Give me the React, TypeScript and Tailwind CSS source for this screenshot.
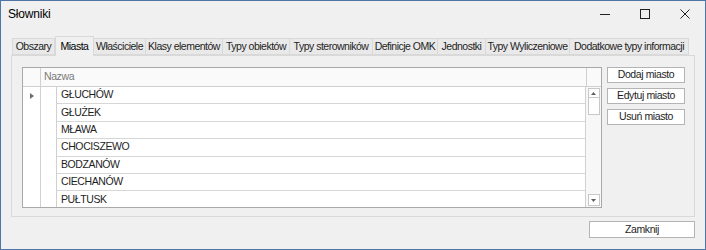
import React from "react";

const tabs = [
  { label: "Obszary", w: 42 },
  { label: "Miasta", w: 39 },
  { label: "Właściciele", w: 52 },
  { label: "Klasy elementów", w: 77 },
  { label: "Typy obiektów", w: 67 },
  { label: "Typy sterowników", w: 83 },
  { label: "Definicje OMK", w: 65 },
  { label: "Jednostki", w: 48 },
  { label: "Typy Wyliczeniowe", w: 84 },
  { label: "Dodatkowe typy informacji", w: 119 },
];

const cities = ["GŁUCHÓW", "GŁUŻEK", "MŁAWA", "CHOCISZEWO", "BODZANÓW", "CIECHANÓW", "PUŁTUSK"];

const font = { fontFamily: "Tahoma, 'Liberation Sans', Arial, sans-serif" };

export default function App() {
  return (
    <div
      className="w-[706px] h-[250px] bg-[#f0f0f0] border border-[#4f74a8] flex flex-col text-[10.5px] tracking-[-0.4px] text-[#1e1e1e] overflow-hidden"
      style={font}
    >
      {/* Title bar */}
      <div className="h-[26px] flex items-center shrink-0">
        <div className="pl-[7px] flex-1 text-[12px] tracking-[-0.2px] text-black">Słowniki</div>
        <CaptionButton>
          <svg width="10" height="10" viewBox="0 0 10 10">
            <path d="M0 5.5h10" stroke="#222" strokeWidth="1" />
          </svg>
        </CaptionButton>
        <CaptionButton>
          <svg width="10" height="10" viewBox="0 0 10 10">
            <rect x="0.5" y="0.5" width="9" height="9" fill="none" stroke="#222" strokeWidth="1" />
          </svg>
        </CaptionButton>
        <CaptionButton>
          <svg width="10" height="10" viewBox="0 0 10 10">
            <path d="M0.5 0.5l9 9M9.5 0.5l-9 9" stroke="#222" strokeWidth="1" />
          </svg>
        </CaptionButton>
      </div>

      {/* Tab strip */}
      <div className="mt-[9px] h-[19px] flex items-end pl-[11px] shrink-0 relative z-10 tracking-[-0.5px]">
        {tabs.map((t, i) =>
          i === 1 ? (
            <div
              key={t.label}
              className="h-[20px] -mb-[1px] bg-[#f0f0f0] border border-b-0 border-[#d9d9d9] flex items-center justify-center whitespace-nowrap text-black"
              style={{ width: t.w }}
            >
              {t.label}
            </div>
          ) : (
            <div
              key={t.label}
              className="h-[17px] bg-[#e9e9e9] border border-[#d9d9d9] -ml-px first:ml-0 flex items-center justify-center whitespace-nowrap text-[#1e1e1e]"
              style={{ width: t.w + 1 }}
            >
              {t.label}
            </div>
          )
        )}
      </div>

      {/* Tab page */}
      <div className="ml-[10px] w-[684px] h-[162px] border border-[#d9d9d9] bg-[#f0f0f0] flex pt-[11px] pl-[10px] gap-[5px] shrink-0">
        {/* Grid */}
        <div className="w-[580px] h-[141px] border border-[#a9a9a9] bg-white flex flex-col overflow-hidden">
          <div className="h-[19px] flex border-b border-[#d0d0d0] bg-[#fafafa] shrink-0">
            <div className="w-[18px] border-r border-[#d0d0d0]" />
            <div className="w-[546px] border-r border-[#d0d0d0] pl-[3px] flex items-center text-[#7a7a7a]">Nazwa</div>
            <div className="flex-1" />
          </div>
          <div className="flex flex-1 min-h-0">
            <div className="w-[18px] border-r border-[#d0d0d0] flex flex-col">
              <div className="h-[17px] flex items-center justify-center">
                <svg width="4" height="6" viewBox="0 0 4 6">
                  <path d="M0 0l4 3-4 3z" fill="#6e6e6e" />
                </svg>
              </div>
            </div>
            <div className="w-[16px] border-r border-[#d0d0d0]" />
            <div className="w-[529px] border-r border-[#d0d0d0] flex flex-col">
              {cities.map((c) => (
                <div key={c} className="h-[17.4px] shrink-0 border-b border-[#d6d6d6] pl-[4px] flex items-center text-[#1e1e1e]">
                  {c}
                </div>
              ))}
            </div>
            {/* Scrollbar */}
            <div className="flex-1 flex flex-col items-center pt-[1px] pb-[1px] bg-[#f7f7f7]">
              <div className="w-[12px] h-[10px] border border-[#c8c8c8] bg-white flex items-center justify-center">
                <svg width="5" height="3" viewBox="0 0 5 3">
                  <path d="M0 3l2.5-3 2.5 3z" fill="#606060" />
                </svg>
              </div>
              <div className="w-[12px] h-[17px] border border-[#c8c8c8] border-t-0 bg-white" />
              <div className="flex-1" />
              <div className="w-[12px] h-[12px] border border-[#c8c8c8] bg-white flex items-center justify-center">
                <svg width="5" height="3" viewBox="0 0 5 3">
                  <path d="M0 0l2.5 3 2.5-3z" fill="#606060" />
                </svg>
              </div>
            </div>
          </div>
        </div>

        {/* Side buttons */}
        <div className="flex flex-col gap-[5px] w-[78px]">
          <DlgButton label="Dodaj miasto" />
          <DlgButton label="Edytuj miasto" />
          <DlgButton label="Usuń miasto" />
        </div>
      </div>

      {/* Bottom */}
      <div className="flex justify-end pr-[10px] mt-[4px]">
        <div className="w-[106px] h-[17px] bg-white border border-[#b4b4b4] flex items-center justify-center text-[#1e1e1e]">
          Zamknij
        </div>
      </div>
    </div>
  );
}

function CaptionButton({ children }: { children: React.ReactNode }) {
  return <div className="w-[40px] h-full flex items-center justify-center">{children}</div>;
}

function DlgButton({ label }: { label: string }) {
  return (
    <div className="h-[16px] bg-white border border-[#b4b4b4] flex items-center justify-center whitespace-nowrap text-[#1e1e1e]">
      {label}
    </div>
  );
}
